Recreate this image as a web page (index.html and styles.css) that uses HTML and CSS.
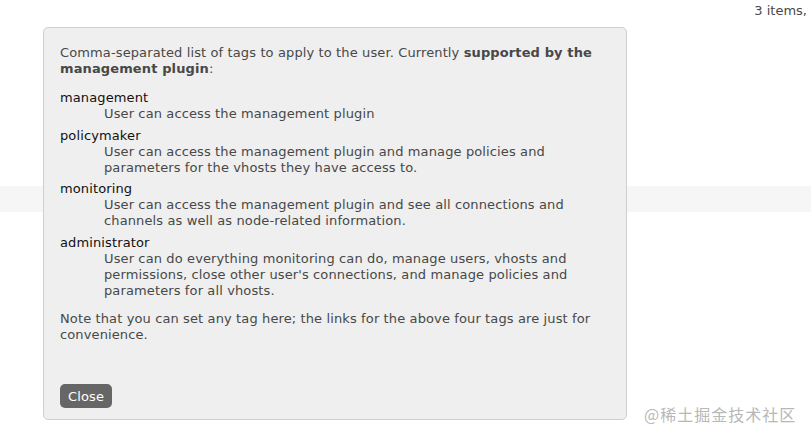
FILE: index.html
```html
<!DOCTYPE html>
<html>
<head>
<meta charset="utf-8">
<link rel="stylesheet" href="styles.css">
</head>
<body>
<div class="page">
  <div class="topbar"><span class="count">3 items,</span></div>
  <div class="band"></div>
</div>
<div class="dialog">
  <p class="intro">Comma-separated list of tags to apply to the user. Currently <b>supported by the management plugin</b>:</p>
  <dl class="tags">
    <dt>management</dt>
    <dd>User can access the management plugin</dd>
    <dt>policymaker</dt>
    <dd>User can access the management plugin and manage policies and parameters for the vhosts they have access to.</dd>
    <dt>monitoring</dt>
    <dd>User can access the management plugin and see all connections and channels as well as node-related information.</dd>
    <dt>administrator</dt>
    <dd>User can do everything monitoring can do, manage users, vhosts and permissions, close other user's connections, and manage policies and parameters for all vhosts.</dd>
  </dl>
  <p class="note">Note that you can set any tag here; the links for the above four tags are just for convenience.</p>
  <button class="close">Close</button>
</div>
<div class="watermark">@稀土掘金技术社区</div>
</body>
</html>
```
FILE: styles.css
```css
html, body {
  margin: 0;
  padding: 0;
  background: #fff;
}
body {
  font-family: "DejaVu Sans", Verdana, sans-serif;
  font-size: 13px;
  letter-spacing: 0.12px;
  color: #484848;
  width: 811px;
  height: 439px;
  overflow: hidden;
  position: relative;
}
.page {
  display: flex;
  flex-direction: column;
}
.topbar {
  display: flex;
  justify-content: flex-end;
  height: 20px;
  padding-top: 3px;
  white-space: nowrap;
}
.count {
  margin-right: 4px;
  letter-spacing: 0;
}
.band {
  margin-top: 163px;
  height: 26px;
  background: #f6f6f6;
}
.dialog {
  position: absolute;
  left: 43px;
  top: 27px;
  width: 550px;
  height: 359px;
  padding: 16px;
  background: #efefef;
  border: 1px solid #cfcfcf;
  border-radius: 5px;
  line-height: 16px;
}
.intro {
  margin: 1px 0 13px 0;
}
.tags {
  margin: 0;
}
.tags dt {
  color: #111;
  margin-top: 5.5px;
}
.tags dt:first-child {
  margin-top: 0;
}
.tags dd {
  margin: 0 0 0 44px;
}
.note {
  margin: 12.5px 0 0 0;
}
.close {
  display: block;
  margin-top: 41px;
  font-family: "DejaVu Sans", Verdana, sans-serif;
  font-size: 13px;
  letter-spacing: 0.12px;
  color: #fff;
  background: #666;
  border: none;
  border-radius: 5px;
  height: 24px;
  padding: 0 8px;
  cursor: pointer;
}
.watermark {
  position: absolute;
  left: 644px;
  top: 402px;
  font-family: "Noto Sans CJK SC", sans-serif;
  font-size: 16px;
  color: #b8b8b8;
  letter-spacing: 1px;
}
```
